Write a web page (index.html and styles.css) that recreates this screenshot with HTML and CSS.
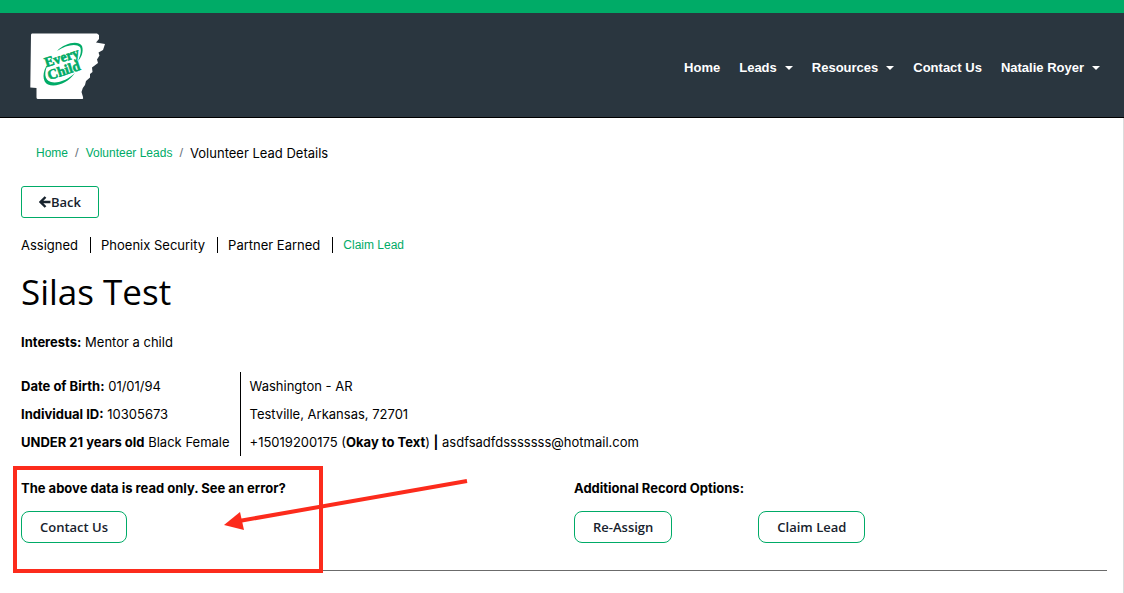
FILE: index.html
```
<!DOCTYPE html>
<html lang="en">
<head>
  <meta charset="utf-8">
  <title>Volunteer Lead Details</title>
  <link rel="stylesheet" href="styles.css">
</head>
<body>

  <header class="navbar">
    <a href="#" class="brand" aria-label="Every Child">
      <svg width="78" height="68" viewBox="0 0 78 68">
        <path d="M4 1.500Q3 1.500 3 3L2.300 55.500L8.500 56V65.500Q8.500 67 10 67H54.500Q55.500 67 55 65L53.500 60Q54 56 57 53L58 49L62 45.500V42L64.500 40L64 35.500L70 31L69 27.500L71.500 23.500L70.500 20.500L75 18L77 12L68 10.500L71 7V3L69 1.500Z" fill="#fff"/>
        <g fill="#00ab67">
          <path d="M29 19C37 11 50 8 54 14C56 20 53 26 50 29C52 24 54 19 52 15C48 11 38 13 29 19Z"/>
          <path d="M20 32C14 39 14 50 20 52.500C28 56 41 50 47 41C41 47 30 52 23 50C16 48 16 40 20 32Z"/>
        </g>
        <g class="brand-text" transform="rotate(-18 35 32)">
          <text x="18" y="30">Every</text>
          <text x="17" y="43">Child</text>
        </g>
      </svg>
    </a>
    <nav class="nav">
      <a href="#">Home</a>
      <a href="#" class="dropdown">Leads</a>
      <a href="#" class="dropdown">Resources</a>
      <a href="#">Contact Us</a>
      <a href="#" class="dropdown">Natalie Royer</a>
    </nav>
  </header>

  <main class="content">
    <nav class="breadcrumb">
      <a href="#">Home</a>
      <span class="slash">/</span>
      <a href="#">Volunteer Leads</a>
      <span class="slash">/</span>
      <span>Volunteer Lead Details</span>
    </nav>

    <button type="button" class="btn btn-back">
      <svg width="12" height="12" viewBox="0 0 12 12">
        <path d="M6.500 1L1.500 6L6.500 11M2 6H11.500" fill="none" stroke="currentColor" stroke-width="2.400"/>
      </svg>Back
    </button>

    <ul class="status">
      <li>Assigned</li>
      <li>Phoenix Security</li>
      <li>Partner Earned</li>
      <li><a href="#">Claim Lead</a></li>
    </ul>

    <h1>Silas Test</h1>
    <p class="interests"><b>Interests:</b> Mentor a child</p>

    <div class="details">
      <div class="details-col">
        <p><b>Date of Birth:</b> 01/01/94</p>
        <p><b>Individual ID:</b> 10305673</p>
        <p><b>UNDER 21 years old</b> Black Female</p>
      </div>
      <div class="details-col">
        <p>Washington - AR</p>
        <p>Testville, Arkansas, 72701</p>
        <p>+15019200175 (<b>Okay to Text</b>) <b>|</b> asdfsadfdsssssss@hotmail.com</p>
      </div>
    </div>

    <div class="options">
      <div class="option-contact">
        <h2>The above data is read only. See an error?</h2>
        <button type="button" class="btn">Contact Us</button>
        <div class="highlight"></div>
        <svg class="arrow" width="246" height="54" viewBox="0 0 246 54">
          <path d="M16 43L244 3" stroke="#fc2b1c" stroke-width="4"/>
          <path d="M1 47L17 34L21 52Z" fill="#fc2b1c"/>
        </svg>
      </div>
      <div class="option-record">
        <h2>Additional Record Options:</h2>
        <button type="button" class="btn">Re-Assign</button>
      </div>
      <div class="option-claim">
        <button type="button" class="btn">Claim Lead</button>
      </div>
    </div>
  </main>

</body>
</html>
```
FILE: styles.css
```
* {
  box-sizing: border-box;
}

body {
  margin: 0;
  font-family: Inter, "Liberation Sans", sans-serif;
  font-size: 13px;
  line-height: 20px;
  color: #000;
  background: #fff;
}

a {
  color: #00ab67;
  text-decoration: none;
}

p, h1, h2, ul {
  margin: 0;
}

/* Header */
.navbar {
  display: flex;
  align-items: flex-start;
  justify-content: space-between;
  height: 118px;
  padding: 19px 24px 0 28px;
  border-top: 13px solid #00ab67;
  border-bottom: 1px solid #000;
  background: #2a363f;
}

.brand svg {
  display: block;
}

.brand-text {
  font-family: "Liberation Serif", serif;
  font-size: 14px;
  font-weight: bold;
  fill: #00ab67;
  stroke: #00ab67;
  stroke-width: 0.6px;
}

.nav {
  display: flex;
  gap: 19px;
  padding-top: 26px;
}

.nav a {
  display: flex;
  align-items: center;
  gap: 8px;
  color: #fff;
  font-family: "Liberation Sans", sans-serif;
  font-size: 13px;
  font-weight: bold;
}

.dropdown::after {
  content: "";
  border-top: 4px solid #fff;
  border-left: 4px solid transparent;
  border-right: 4px solid transparent;
}

/* Page */
.content {
  min-height: calc(100vh - 118px);
  padding: 25px 16px 0 21px;
  border-right: 1px solid #dcdcdc;
}

.breadcrumb {
  display: flex;
  gap: 7px;
  padding-left: 15px;
  margin-bottom: 23px;
}

.breadcrumb a,
.status a {
  font-family: "Liberation Sans", sans-serif;
  font-size: 12px;
}

.slash {
  color: #6c757d;
  font-family: "Liberation Sans", sans-serif;
}

.btn {
  height: 32px;
  padding: 0 18px;
  border: 1px solid #00ab67;
  border-radius: 8px;
  background: #fff;
  color: #17222d;
  font-family: "Open Sans", sans-serif;
  font-size: 13px;
  font-weight: 600;
}

.btn-back {
  display: flex;
  align-items: center;
  padding: 0 17px;
  border-radius: 3px;
}

.status {
  display: flex;
  align-items: center;
  padding: 0;
  margin: 17px 0 19px;
  list-style: none;
}

.status li + li {
  display: flex;
  align-items: center;
}

.status li + li::before {
  content: "";
  height: 16px;
  margin: 0 10px 0 12px;
  border-left: 1px solid #000;
}

h1 {
  margin-bottom: 22px;
  font-family: "Open Sans", sans-serif;
  font-size: 35px;
  font-weight: 400;
  line-height: 36px;
}

.interests {
  margin-bottom: 20px;
}

.details {
  display: flex;
  margin-bottom: 22px;
  line-height: 28px;
}

.details-col + .details-col {
  padding-left: 9px;
  margin-left: 10px;
  border-left: 1px solid #000;
}

/* Options */
.options {
  display: grid;
  grid-template-columns: repeat(6, minmax(0, 1fr));
  align-items: end;
  column-gap: 20px;
  padding-bottom: 27px;
  border-bottom: 1px solid #6b6b6b;
}

.option-contact {
  position: relative;
  grid-column: span 3;
}

h2 {
  margin-bottom: 13px;
  font-size: 13px;
  font-weight: bold;
  line-height: 20px;
  white-space: nowrap;
}

/* Callout drawn over the contact option */
.highlight {
  position: absolute;
  top: -12px;
  left: -8px;
  width: 310px;
  height: 107px;
  border: 4px solid #fc2b1c;
}

.arrow {
  position: absolute;
  top: 0;
  left: 202px;
}
```
